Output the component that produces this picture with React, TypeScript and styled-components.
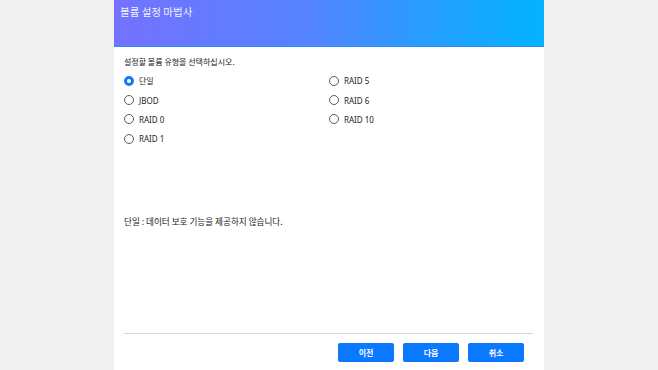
import styled, { createGlobalStyle } from 'styled-components';

const GlobalStyle = createGlobalStyle`
    html, body {
        margin: 0;
        padding: 0;
        background: #f0f0f0;
    }
    body {
        font-family: 'Noto Sans', 'Noto Sans CJK KR', sans-serif;
    }
`;

type Option = { id: string; label: string };

const leftOptions: Option[] = [
    { id: 'single', label: '단일' },
    { id: 'jbod', label: 'JBOD' },
    { id: 'raid0', label: 'RAID 0' },
    { id: 'raid1', label: 'RAID 1' },
];

const rightOptions: Option[] = [
    { id: 'raid5', label: 'RAID 5' },
    { id: 'raid6', label: 'RAID 6' },
    { id: 'raid10', label: 'RAID 10' },
];

const Page = styled.div`
    display: flex;
    justify-content: center;
    width: 100%;
    height: 370px;
    background: #f0f0f0;
`;

const Dialog = styled.div`
    display: flex;
    flex-direction: column;
    width: 430px;
    height: 370px;
    background: #ffffff;
`;

const Header = styled.div`
    height: 47px;
    border-bottom: 1px solid #2f8cf5;
    background: linear-gradient(90deg, #7472fe 0%, #5583ff 45%, #2a9bff 70%, #02b3ff 100%);
    padding: 5px 0 0 6px;
    box-sizing: border-box;
`;

const Title = styled.h1`
    margin: 0;
    font-family: 'Noto Sans CJK KR', sans-serif;
    font-size: 10.5px;
    line-height: 14px;
    font-weight: 400;
    color: rgba(255, 255, 255, 0.92);
`;

const Body = styled.div`
    flex: 1;
    display: flex;
    flex-direction: column;
    padding: 9px 11px 0 10px;
`;

const Prompt = styled.p`
    margin: 0;
    font-family: 'Noto Sans CJK KR', sans-serif;
    font-size: 8px;
    line-height: 12px;
    color: #222;
`;

const OptionGrid = styled.div`
    display: grid;
    grid-template-columns: 205px 1fr;
    margin-top: 3px;
`;

const Column = styled.div`
    display: grid;
    grid-auto-rows: 19.4px;
`;

const RadioRow = styled.label`
    display: flex;
    align-items: center;
    gap: 5px;
    font-family: 'Noto Sans', 'Noto Sans CJK KR', sans-serif;
    font-size: 8px;
    color: #222;
`;

const RadioDot = styled.span<{ $checked?: boolean }>`
    width: 10px;
    height: 10px;
    box-sizing: border-box;
    border-radius: 50%;
    border: ${p => (p.$checked ? '3px solid #1677ff' : '1px solid #5a5a5a')};
    background: #fff;
    flex-shrink: 0;
`;

const Description = styled.p`
    margin: 66px 0 0;
    font-family: 'Noto Sans CJK KR', sans-serif;
    font-size: 8.6px;
    line-height: 12px;
    color: #222;
`;

const Footer = styled.div`
    margin-top: auto;
    border-top: 1px solid #d4d4de;
    display: flex;
    justify-content: flex-end;
    gap: 9px;
    padding: 9px 9px 8px 0;
`;

const Button = styled.button`
    width: 56px;
    height: 19px;
    border: none;
    border-radius: 2px;
    background: #0a78ff;
    color: #fff;
    font-family: 'Noto Sans CJK KR', sans-serif;
    font-size: 8px;
    font-weight: 700;
    padding: 0;
    cursor: pointer;
`;

const Radio = ({ label, checked }: { label: string; checked?: boolean }) => (
    <RadioRow>
        <RadioDot $checked={checked} />
        {label}
    </RadioRow>
);

export default function App() {
    return (
        <Page>
            <GlobalStyle />
            <Dialog>
                <Header>
                    <Title>볼륨 설정 마법사</Title>
                </Header>
                <Body>
                    <Prompt>설정할 볼륨 유형을 선택하십시오.</Prompt>
                    <OptionGrid>
                        <Column>
                            {leftOptions.map(o => (
                                <Radio key={o.id} label={o.label} checked={o.id === 'single'} />
                            ))}
                        </Column>
                        <Column>
                            {rightOptions.map(o => (
                                <Radio key={o.id} label={o.label} />
                            ))}
                        </Column>
                    </OptionGrid>
                    <Description>단일 : 데이터 보호 기능을 제공하지 않습니다.</Description>
                    <Footer>
                        <Button>이전</Button>
                        <Button>다음</Button>
                        <Button>취소</Button>
                    </Footer>
                </Body>
            </Dialog>
        </Page>
    );
}
